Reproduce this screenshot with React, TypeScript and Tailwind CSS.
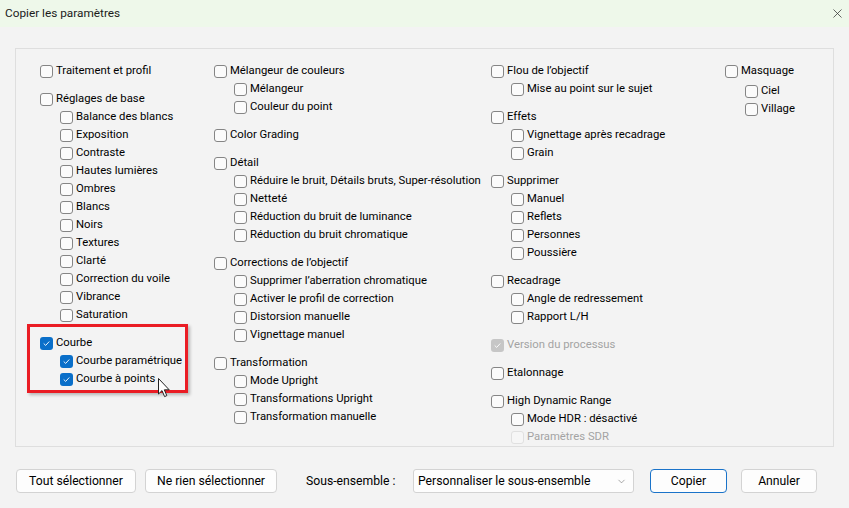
import { X, ChevronDown } from "lucide-react";

type Item = { label: string; checked?: boolean; disabled?: boolean };
type Group = { item: Item; children?: Item[]; childOffset?: boolean };

const columns: { width: string; groups: Group[] }[] = [
  {
    width: "w-[174px]",
    groups: [
      { item: { label: "Traitement et profil" } },
      {
        item: { label: "Réglages de base" },
        children: [
          { label: "Balance des blancs" },
          { label: "Exposition" },
          { label: "Contraste" },
          { label: "Hautes lumières" },
          { label: "Ombres" },
          { label: "Blancs" },
          { label: "Noirs" },
          { label: "Textures" },
          { label: "Clarté" },
          { label: "Correction du voile" },
          { label: "Vibrance" },
          { label: "Saturation" },
        ],
      },
      {
        item: { label: "Courbe", checked: true },
        children: [
          { label: "Courbe paramétrique", checked: true },
          { label: "Courbe à points", checked: true },
        ],
      },
    ],
  },
  {
    width: "w-[277px]",
    groups: [
      {
        item: { label: "Mélangeur de couleurs" },
        children: [{ label: "Mélangeur" }, { label: "Couleur du point" }],
      },
      { item: { label: "Color Grading" } },
      {
        item: { label: "Détail" },
        children: [
          { label: "Réduire le bruit, Détails bruts, Super-résolution" },
          { label: "Netteté" },
          { label: "Réduction du bruit de luminance" },
          { label: "Réduction du bruit chromatique" },
        ],
      },
      {
        item: { label: "Corrections de l’objectif" },
        children: [
          { label: "Supprimer l’aberration chromatique" },
          { label: "Activer le profil de correction" },
          { label: "Distorsion manuelle" },
          { label: "Vignettage manuel" },
        ],
      },
      {
        item: { label: "Transformation" },
        children: [
          { label: "Mode Upright" },
          { label: "Transformations Upright" },
          { label: "Transformation manuelle" },
        ],
      },
    ],
  },
  {
    width: "w-[234px]",
    groups: [
      {
        item: { label: "Flou de l’objectif" },
        children: [{ label: "Mise au point sur le sujet" }],
      },
      {
        item: { label: "Effets" },
        children: [{ label: "Vignettage après recadrage" }, { label: "Grain" }],
      },
      {
        item: { label: "Supprimer" },
        children: [
          { label: "Manuel" },
          { label: "Reflets" },
          { label: "Personnes" },
          { label: "Poussière" },
        ],
      },
      {
        item: { label: "Recadrage" },
        children: [{ label: "Angle de redressement" }, { label: "Rapport L/H" }],
      },
      { item: { label: "Version du processus", checked: true, disabled: true } },
      { item: { label: "Etalonnage" } },
      {
        item: { label: "High Dynamic Range" },
        children: [
          { label: "Mode HDR : désactivé" },
          { label: "Paramètres SDR", disabled: true },
        ],
      },
    ],
  },
  {
    width: "flex-1",
    groups: [
      {
        item: { label: "Masquage" },
        children: [{ label: "Ciel" }, { label: "Village" }],
        childOffset: true,
      },
    ],
  },
];

function Checkbox({ checked, disabled }: { checked?: boolean; disabled?: boolean }) {
  if (checked) {
    return (
      <span
        className={
          disabled
            ? "w-[13px] h-[13px] rounded-[3px] bg-[#c6c6c6] flex items-center justify-center shrink-0"
            : "w-[13px] h-[13px] rounded-[3px] bg-[#0a6fc9] flex items-center justify-center shrink-0"
        }
      >
        <svg width="9" height="9" viewBox="0 0 9 9" fill="none">
          <path d="M2 4.8 L3.7 6.4 L7 2.8" stroke="white" strokeWidth="0.9" strokeLinecap="round" strokeLinejoin="round" />
        </svg>
      </span>
    );
  }
  return (
    <span
      className={
        disabled
          ? "w-[13px] h-[13px] rounded-[3px] border border-[#e0e0e0] bg-[#f6f6f6] shrink-0"
          : "w-[13px] h-[13px] rounded-[3px] border border-[#858585] bg-[#fbfbfb] shrink-0"
      }
    />
  );
}

function Row({ item }: { item: Item }) {
  return (
    <div className="h-[18px] flex items-center gap-[3px] whitespace-nowrap">
      <Checkbox checked={item.checked} disabled={item.disabled} />
      <span className={item.disabled ? "text-[#a3a3a3]" : "text-black"}>{item.label}</span>
    </div>
  );
}

function Button({ children, primary, className }: { children: React.ReactNode; primary?: boolean; className?: string }) {
  return (
    <button
      className={`h-[24px] rounded-[4px] bg-[#fdfdfd] border ${
        primary ? "border-[#1a73c9]" : "border-[#d3d3d3]"
      } flex items-center justify-center ${className ?? ""}`}
    >
      {children}
    </button>
  );
}

export default function App() {
  return (
    <div
      className="w-[849px] h-[508px] bg-[#f3f3f3] flex flex-col text-[11.3px] text-black overflow-hidden relative"
      style={{ fontFamily: 'Roboto, "Segoe UI", sans-serif' }}
    >
      {/* Title bar */}
      <div className="h-[27px] bg-[#eef8ea] flex items-center justify-between pl-[5px] pr-[4px]">
        <span className="text-[#1b1b1b] text-[11.8px]">Copier les paramètres</span>
        <X className="w-[15px] h-[15px] text-[#333]" strokeWidth={1.2} />
      </div>

      {/* Settings panel */}
      <div className="mt-[21px] mx-[15px] h-[399px] border border-[#dedede] relative">
        <div className="flex pl-[24px] pt-[13px]">
          {columns.map((col, ci) => (
            <div key={ci} className={`${col.width} flex flex-col gap-[10px]`}>
              {col.groups.map((g, gi) => (
                <div key={gi} className="flex flex-col">
                  <Row item={g.item} />
                  {g.children && (
                    <div className={`flex flex-col pl-[20px] ${g.childOffset ? "mt-[2px]" : ""}`}>
                      {g.children.map((c, i) => (
                        <Row key={i} item={c} />
                      ))}
                    </div>
                  )}
                </div>
              ))}
            </div>
          ))}
        </div>

        {/* Red highlight annotation */}
        <div className="absolute left-[11px] top-[275px] w-[161px] h-[69px] border-[3px] border-[#ea1c24] shadow-[2px_2px_3px_rgba(0,0,0,0.25)]" />

        {/* Mouse cursor */}
        <svg className="absolute left-[142px] top-[329px]" width="13" height="20" viewBox="0 0 13 20">
          <path
            d="M0.5 0.5 L0.5 16 L4 12.6 L6.6 18.6 L8.8 17.6 L6.3 11.8 L11.2 11.8 Z"
            fill="white"
            stroke="#222"
            strokeWidth="1"
            strokeLinejoin="round"
          />
        </svg>
      </div>

      {/* Bottom buttons */}
      <div className="flex items-center mt-[22px] pl-[16px] text-[12.2px]">
        <Button className="w-[120px]">Tout sélectionner</Button>
        <Button className="w-[132px] ml-[9px]">Ne rien sélectionner</Button>
        <span className="ml-[29px] w-[107px]">Sous-ensemble :</span>
        <div className="w-[221px] h-[24px] rounded-[3px] bg-[#fdfdfd] border border-[#d3d3d3] flex items-center justify-between pl-[4px] pr-[6px]">
          <span>Personnaliser le sous-ensemble</span>
          <ChevronDown className="w-[11px] h-[11px] text-[#777]" strokeWidth={1.4} />
        </div>
        <Button primary className="w-[77px] ml-[16px]">
          Copier
        </Button>
        <Button className="w-[76px] ml-[14px]">Annuler</Button>
      </div>
    </div>
  );
}
